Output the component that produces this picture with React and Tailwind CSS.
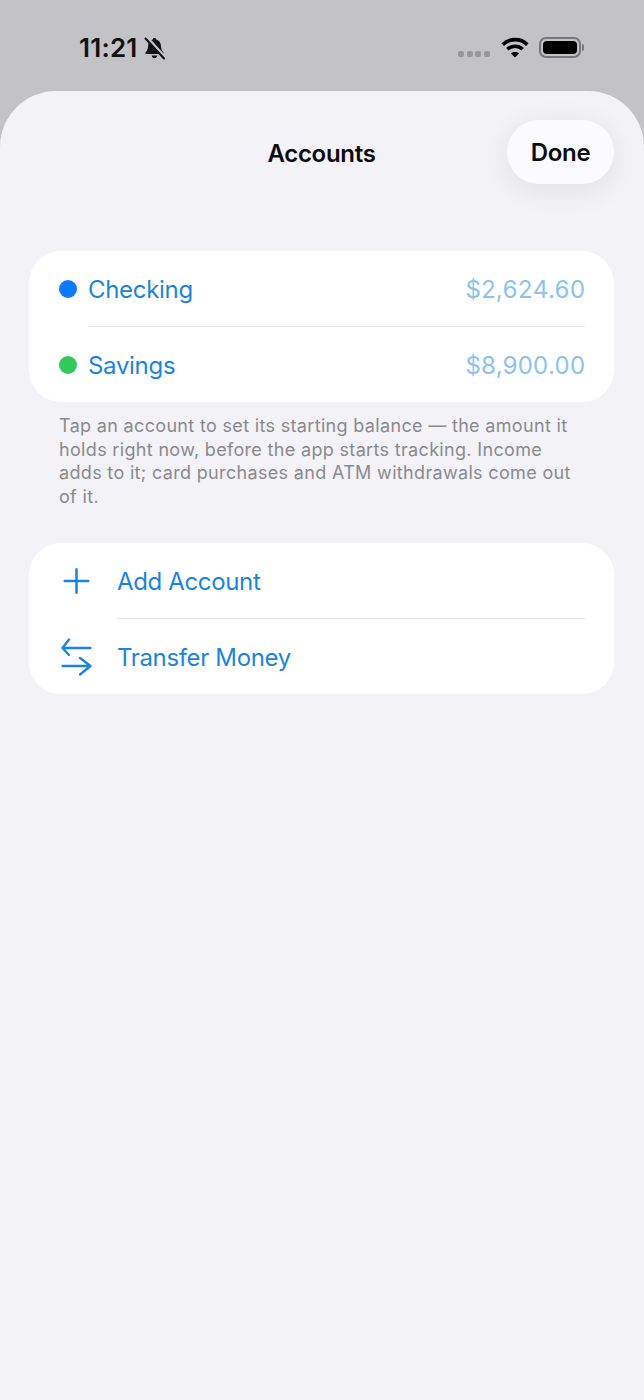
import React from 'react'

const font = "font-['Inter','Noto_Sans',sans-serif]"

function BellSlash() {
  return (
    <svg width="23" height="23" viewBox="0 0 23 23" fill="none">
      <path d="M11.500 1c1 0 1.700.7 1.800 1.600 3 .8 4.400 3.300 4.600 6.200.2 2.800.7 4.700 2.600 6.700.5.600.2 1.500-.6 1.500H3.100c-.8 0-1.100-.9-.6-1.500 1.900-2 2.400-3.900 2.600-6.700.2-2.900 1.600-5.400 4.600-6.200.1-.9.800-1.600 1.800-1.600z" fill="#111114" />
      <path d="M8.700 18.500h5.600c-.2 1.500-1.400 2.800-2.800 2.800s-2.600-1.300-2.800-2.800z" fill="#111114" />
      <path d="M3.500 0.500l18 19.500" stroke="#c3c2c7" strokeWidth="3.500" />
      <path d="M2.500 1.500l18.500 20" stroke="#111114" strokeWidth="2" strokeLinecap="round" />
    </svg>
  )
}

function Wifi() {
  return (
    <svg width="28" height="21" viewBox="0 0 28 21" fill="none" stroke="#000" strokeWidth="3.600">
      <path d="M1.700 7.600C8.500 1 19.500 1 26.300 7.600" />
      <path d="M6.300 12.300c4.300-4 11.100-4 15.400 0" />
      <path d="M14 20.500l-4-4.100c2.200-1.900 5.800-1.900 8 0z" fill="#000" stroke="none" />
    </svg>
  )
}

function Battery() {
  return (
    <div className="flex items-center gap-[1px]">
      <div className="w-[42px] h-[21px] rounded-[7px] border-2 border-[#77767b] p-[2px]">
        <div className="w-full h-full rounded-[4px] bg-black" />
      </div>
      <div className="w-[2px] h-[7px] rounded-r-full bg-[#77767b]" />
    </div>
  )
}

function PlusIcon() {
  return (
    <svg width="28" height="28" viewBox="0 0 28 28" fill="none" stroke="#1a85e0" strokeWidth="2.500" strokeLinecap="round">
      <path d="M14.500 2.200v23.600M2.700 14h23.600" />
    </svg>
  )
}

function TransferIcon() {
  return (
    <svg width="32" height="38" viewBox="0 0 32 38" fill="none" stroke="#1a85e0" strokeWidth="2.300" strokeLinecap="round" strokeLinejoin="round">
      <path d="M2.500 10h28M9 1.500L2.500 10 9 17" />
      <path d="M2.500 28h28M20 20l10.500 8L20 36.500" />
    </svg>
  )
}

function AccountRow({ color, name, amount, divider }) {
  return (
    <div className="flex items-center h-[76px] pl-[30px]">
      <div className={`w-[18px] h-[18px] rounded-full mr-[11px] ${color}`} />
      <div className={`flex-1 h-full flex items-center justify-between mr-[29px] ${divider ? 'border-b border-[#e4e4e8]' : ''}`}>
        <span className="text-[24px] pt-[2px] text-[#1a85e0] tracking-[-0.3px]">{name}</span>
        <span className="text-[24px] pt-[2px] text-[#8cc3ef] tabular-nums tracking-[-0.25px]">{amount}</span>
      </div>
    </div>
  )
}

function ActionRow({ icon, label, divider }) {
  return (
    <div className="flex items-center h-[76px] pl-[30px]">
      <div className="w-[36px] mr-[23px] -ml-[1px] flex justify-center">{icon}</div>
      <div className={`flex-1 h-full flex items-center mr-[29px] ${divider ? 'border-b border-[#e4e4e8]' : ''}`}>
        <span className="text-[24px] pt-[2px] text-[#1a85e0] tracking-[-0.35px]">{label}</span>
      </div>
    </div>
  )
}

export default function App() {
  return (
    <div className={`w-[644px] h-[1400px] bg-[#c3c2c7] overflow-hidden flex flex-col ${font}`}>
      <div className="h-[91px] shrink-0 flex items-start justify-between pl-[79px] pr-[60px] pt-[33px]">
        <div className="flex items-center gap-[6px]">
          <span className="text-[26px] leading-[30px] font-semibold text-[#111114] tracking-[0.2px]">11:21</span>
          <BellSlash />
        </div>
        <div className="flex items-center gap-[10.5px] pt-[4px]">
          <div className="flex gap-[2.67px] pt-[13px]">
            <div className="w-[6px] h-[6px] rounded-[2px] bg-[#98979b]" />
            <div className="w-[6px] h-[6px] rounded-[2px] bg-[#98979b]" />
            <div className="w-[6px] h-[6px] rounded-[2px] bg-[#98979b]" />
            <div className="w-[6px] h-[6px] rounded-[2px] bg-[#98979b]" />
          </div>
          <Wifi />
          <Battery />
        </div>
      </div>

      <div className="flex-1 bg-[#f2f2f7] rounded-t-[56px] pl-[29px] pr-[30px]">
        <div className="grid grid-cols-[1fr_auto_1fr] items-center h-[64px] mt-[29px] mb-[67px]">
          <div />
          <div className="text-[24px] pt-[3px] font-semibold text-[#0c0c0e] tracking-[-0.3px]">Accounts</div>
          <div className="flex justify-end">
            <button className="w-[107px] h-[64px] pt-[2px] rounded-full bg-[#fbfafe] text-[24px] font-semibold text-[#0c0c0e] tracking-[-0.3px] shadow-[0_6px_30px_rgba(0,0,0,0.08)]">
              Done
            </button>
          </div>
        </div>

        <div className="bg-white rounded-[32px] h-[151px] overflow-hidden">
          <AccountRow color="bg-[#0a7aff]" name="Checking" amount="$2,624.60" divider />
          <AccountRow color="bg-[#34c759]" name="Savings" amount="$8,900.00" />
        </div>

        <p className="mt-[12px] ml-[30px] mr-[29px] text-[18px] leading-[23.5px] tracking-[0.33px] text-[#8a8a8e]">
          Tap an account to set its starting balance — the amount it holds right now, before the app starts tracking. Income adds to it; card purchases and ATM withdrawals come out of it.
        </p>

        <div className="mt-[35px] bg-white rounded-[32px] h-[151px] overflow-hidden">
          <ActionRow icon={<PlusIcon />} label="Add Account" divider />
          <ActionRow icon={<TransferIcon />} label="Transfer Money" />
        </div>
      </div>
    </div>
  )
}
